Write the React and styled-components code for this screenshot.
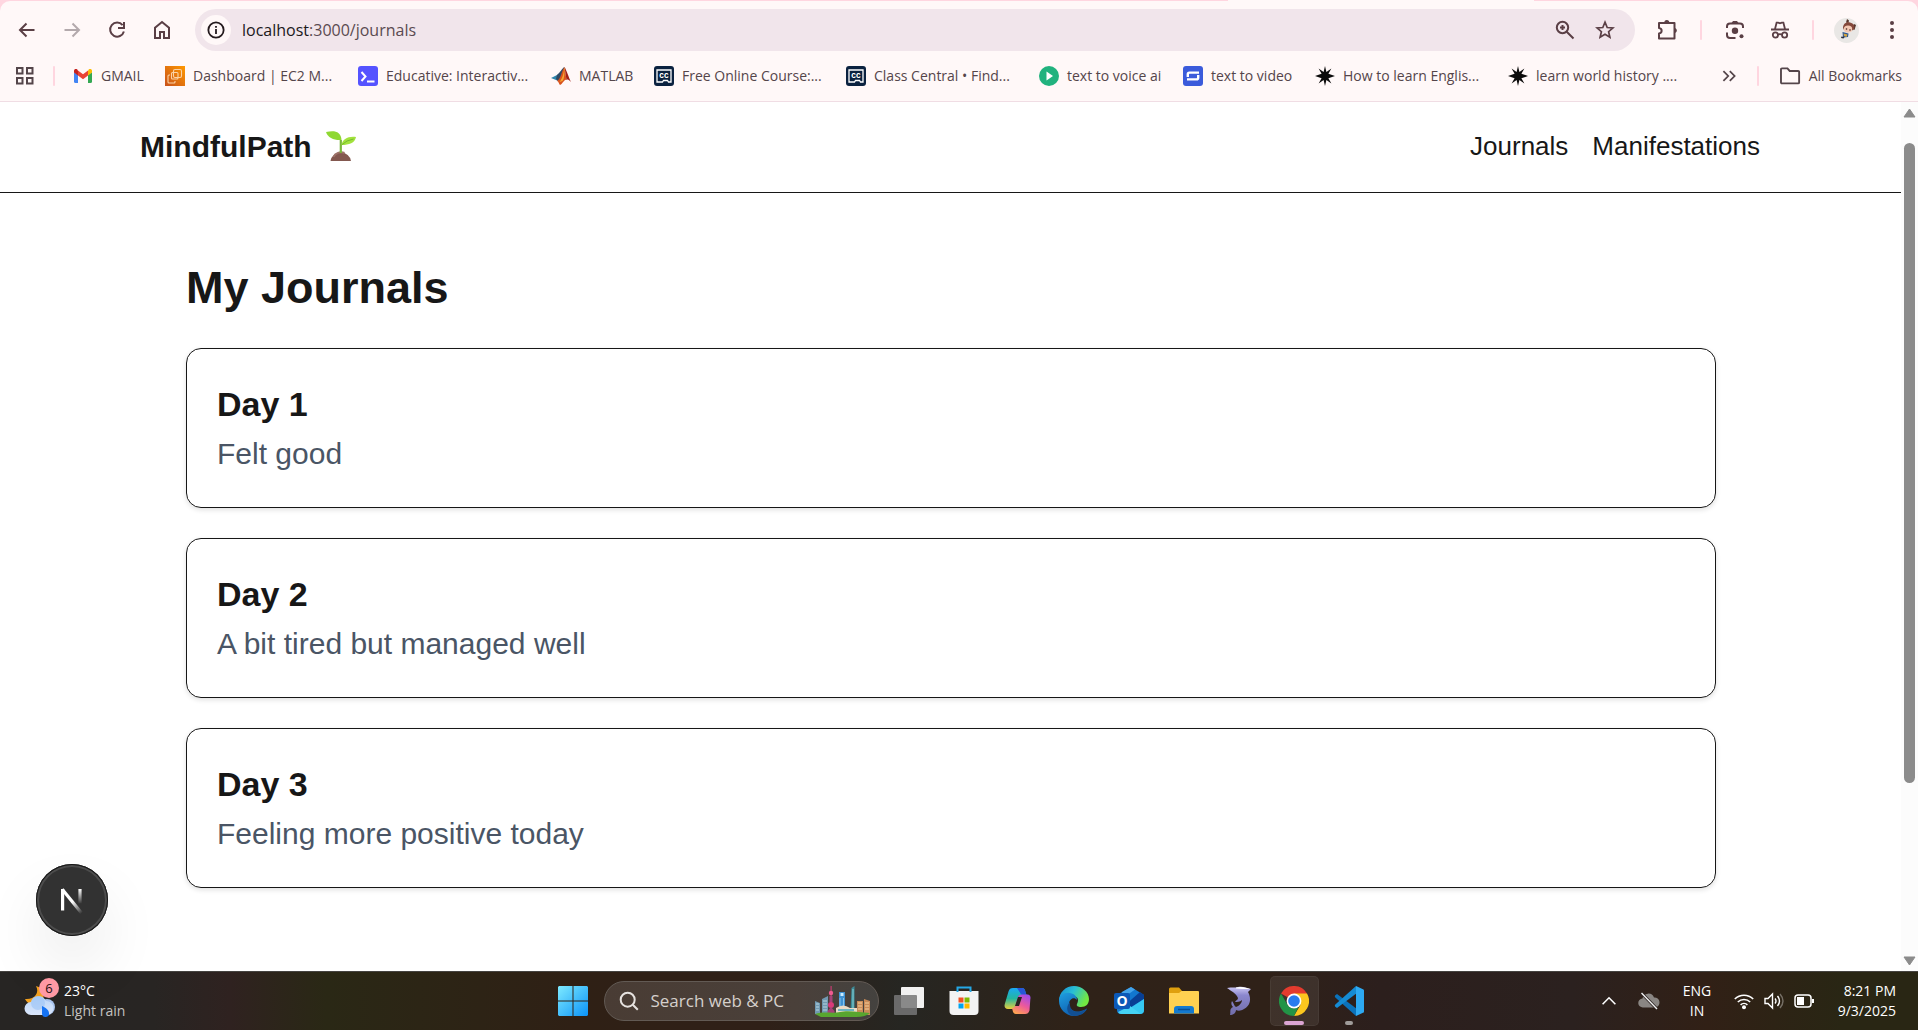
import React from 'react';
import styled, { createGlobalStyle } from 'styled-components';

const GlobalStyle = createGlobalStyle`
  * {
    box-sizing: border-box;
  }

  body {
    margin: 0;
    background: #fff;
    overflow: hidden;
  }

  button, input {
    font: inherit;
    color: inherit;
    border: none;
    background: none;
    padding: 0;
  }

  svg {
    display: block;
    flex-shrink: 0;
  }

  a {
    color: inherit;
    text-decoration: none;
  }
`;

const uiFont = `'Open Sans', 'Noto Sans', sans-serif`;

const Screen = styled.div`
  display: flex;
  flex-direction: column;
  height: 100vh;
  overflow: hidden;
`;

/* ---------- browser ---------- */

const TabStrip = styled.div`
  background: linear-gradient(to right, #ffd6e0 64%, #fff8f8 64%, #fff8f8 80%, #ffd6e0 80%);
  padding-top: 1px;
`;

const BrowserChrome = styled.header`
  background: #fff8f8;
  border-bottom: 1px solid #f0dde4;
  border-radius: 10px 10px 0 0;
  color: #5a3f45;
  font-family: ${uiFont};
`;

const Toolbar = styled.div`
  display: flex;
  align-items: center;
  height: 58px;
  padding: 0 4px;
`;

const ToolButton = styled.button`
  display: flex;
  align-items: center;
  justify-content: center;
  width: ${({ $narrow }) => ($narrow ? '40px' : '45px')};
  height: 40px;
  color: ${({ $muted }) => ($muted ? '#b3a9ac' : 'inherit')};
`;

const AddressBar = styled.div`
  flex: 1;
  display: flex;
  align-items: center;
  height: 42px;
  margin: 0 10px 0 11px;
  padding: 0 10px 0 6px;
  border-radius: 21px;
  background: #f1e5eb;
`;

const SiteInfo = styled.button`
  display: flex;
  align-items: center;
  justify-content: center;
  width: 30px;
  height: 30px;
  border-radius: 50%;
  background: #fff8f8;
  color: #241a1d;
`;

const Url = styled.div`
  flex: 1;
  padding-left: 11px;
  font-size: 16px;
  line-height: 24px;
  color: #5a4a50;

  b {
    font-weight: 400;
    color: #20181b;
  }
`;

const Divider = styled.span`
  width: 2px;
  height: 20px;
  margin: 0 ${({ $gap }) => $gap || 10}px;
  border-radius: 1px;
  background: #ffd6e0;
  flex-shrink: 0;
`;

const BookmarksBar = styled.nav`
  display: flex;
  align-items: center;
  height: 42px;
  padding: 0 16px 8px 15px;
  font-size: 14px;
  line-height: 20px;
  color: #54454a;
`;

const Bookmark = styled.a`
  display: flex;
  align-items: center;
  gap: 8px;
  width: ${({ $width }) => ($width ? `${$width}px` : 'auto')};
  flex-shrink: 0;
  white-space: nowrap;
`;

const BookmarkEnd = styled.div`
  display: flex;
  align-items: center;
  margin-left: auto;
`;

/* ---------- web page ---------- */

const Viewport = styled.div`
  position: relative;
  flex: 1;
  min-height: 0;
  display: flex;
  font-family: 'Liberation Sans', Arial, sans-serif;
  color: #171717;
  background: #fff;
`;

const Page = styled.div`
  flex: 1;
  overflow: hidden;
`;

const SiteHeader = styled.div`
  display: flex;
  align-items: center;
  justify-content: space-between;
  height: 91px;
  padding: 0 141px 2px 140px;
  border-bottom: 1px solid #171717;
`;

const Brand = styled.a`
  display: flex;
  align-items: center;
  gap: 13px;
  font-size: 30px;
  line-height: 45px;
  font-weight: 700;
`;

const SiteNav = styled.nav`
  display: flex;
  gap: 24px;
  font-size: 26px;
  line-height: 38px;
`;

const Main = styled.main`
  padding: 65px 185px 60px 186px;
`;

const Title = styled.h1`
  margin: 0 0 30px;
  font-size: 45px;
  line-height: 60px;
  font-weight: 700;
`;

const JournalList = styled.div`
  display: grid;
  gap: 30px;
`;

const JournalCard = styled.article`
  padding: 29px 30px 31px;
  border: 1px solid #171717;
  border-radius: 15px;
  box-shadow: 0 2px 5px rgba(0, 0, 0, 0.12);
`;

const JournalTitle = styled.h2`
  margin: 0;
  font-size: 34px;
  line-height: 53px;
  font-weight: 600;
`;

const JournalText = styled.p`
  margin: 0;
  font-size: 30px;
  line-height: 45px;
  color: #4a5565;
`;

const DevBadge = styled.button`
  position: absolute;
  left: 36px;
  bottom: 35px;
  display: flex;
  align-items: center;
  justify-content: center;
  width: 72px;
  height: 72px;
  border-radius: 50%;
  background: #323232;
  box-shadow: 0 0 0 1px #171717 inset, 0 0 0 3px #4c4c4c inset, 0 30px 60px rgba(0, 0, 0, 0.08);
`;

const ScrollTrack = styled.div`
  display: grid;
  grid-template-rows: 22px 19fr 640fr 168fr 20px;
  justify-items: center;
  align-items: center;
  width: 17px;
  background: #fcfcfc;
`;

const ScrollThumb = styled.div`
  grid-row: 3;
  width: 11px;
  height: 100%;
  border-radius: 6px;
  background: #8b8b8b;
`;

const ScrollArrow = styled.svg`
  grid-row: ${({ $row }) => $row};
`;

/* ---------- taskbar ---------- */

const TaskbarWrap = styled.footer`
  display: grid;
  grid-template-columns: minmax(0, 1fr) auto minmax(0, 1fr);
  align-items: center;
  height: 59px;
  padding-left: 4px;
  border-top: 1px solid #454340;
  background: linear-gradient(
    to right,
    #272523 0%,
    #282523 8%,
    #2f2220 12%,
    #2a2815 17%,
    #2f2015 30%,
    #2f2018 40%,
    #262622 47%,
    #2f2218 56%,
    #2f2118 66%,
    #2c1f1d 72%,
    #2b211f 82%,
    #312016 89%,
    #292614 96%,
    #292614 100%
  );
  color: #fff;
  font-family: ${uiFont};
  font-size: 14px;
  line-height: 20px;
`;

const Weather = styled.button`
  position: relative;
  display: flex;
  align-items: center;
  gap: 8px;
  justify-self: start;
  margin-left: 20px;
  text-align: left;
`;

const WeatherText = styled.span`
  display: flex;
  flex-direction: column;

  small {
    font-size: 14px;
    color: #c4c2c0;
  }
`;

const CountBadge = styled.span`
  position: absolute;
  left: 15px;
  top: -3px;
  width: 20px;
  height: 20px;
  border-radius: 50%;
  background: #ff99a4;
  color: #1c1012;
  font-size: 13px;
  line-height: 20px;
  text-align: center;
`;

const Apps = styled.div`
  display: flex;
  align-items: center;
`;

const AppButton = styled.button`
  position: relative;
  display: flex;
  align-items: center;
  justify-content: center;
  width: 49px;
  height: 50px;
  margin: 0 3px;
  border-radius: 5px;
  background: ${({ $active }) => ($active ? 'rgba(255, 255, 255, 0.08)' : 'none')};
  box-shadow: ${({ $active }) => ($active ? '0 0 0 1px rgba(255, 255, 255, 0.05) inset' : 'none')};
`;

const Running = styled.span`
  position: absolute;
  bottom: 1px;
  width: ${({ $wide }) => ($wide ? '20px' : '8px')};
  height: 4px;
  border-radius: 2px;
  background: ${({ $wide }) => ($wide ? '#dba5d3' : '#a09c9a')};
`;

const SearchBox = styled.label`
  display: flex;
  align-items: center;
  width: 275px;
  height: 40px;
  margin: 0 3px;
  padding: 0 6px 0 14px;
  border: 1px solid #625a54;
  border-radius: 20px;
  background: linear-gradient(to right, #493c34, #4a403a 70%, #44423f);

  input {
    flex: 1;
    min-width: 0;
    margin-left: 12px;
    font-size: 17px;
    line-height: 24px;
    outline: none;
  }

  input::placeholder {
    color: #d5d0cc;
    opacity: 1;
  }
`;

const Tray = styled.div`
  display: flex;
  align-items: center;
  justify-self: end;
  padding-right: 22px;
`;

const TrayButton = styled.button`
  display: flex;
  align-items: center;
  justify-content: center;
  width: 40px;
  height: 40px;
`;

const TrayStatus = styled.button`
  display: flex;
  align-items: center;
  gap: 10px;
  margin: 0 10px 0 9px;
`;

const TrayText = styled.button`
  display: flex;
  flex-direction: column;
  width: ${({ $width }) => $width}px;
  text-align: ${({ $align }) => $align};
  white-space: nowrap;
`;

/* ---------- icons ---------- */

const Line = ({ size = 20, w = 2, children, ...rest }) => (
  <svg width={size} height={size} viewBox="0 0 20 20" fill="none" stroke="currentColor" strokeWidth={w} {...rest}>
    {children}
  </svg>
);

const BackIcon = () => <Line><path d="M17.500 10H3.500M9.500 3.500L3 10l6.500 6.500" /></Line>;
const ForwardIcon = () => <Line><path d="M2.500 10h14M10.500 3.500L17 10l-6.500 6.500" /></Line>;
const ReloadIcon = () => <Line><path d="M15.600 5.200A7 7 0 1 0 16.900 11.500M17 2v6h-6" /></Line>;
const HomeIcon = () => <Line><path d="M3 18V7.800L10 2l7 5.800V18h-5v-6H8v6H3z" /></Line>;
const InfoIcon = () => (
  <Line size={18}><circle cx="10" cy="10" r="8.500" /><path d="M10 9v5.500M10 5.500v2" /></Line>
);
const ZoomIcon = () => (
  <Line><circle cx="7.500" cy="7.500" r="5.700" /><path d="M11.700 11.700L18.500 18.500M7.500 5v5M5 7.500h5" /></Line>
);
const StarIcon = () => (
  <Line w={1.7}><path d="M10 2.200l2.200 5.300 5.700.5-4.300 3.700 1.300 5.600L10 14.300l-4.900 3 1.300-5.600L2.100 8l5.700-.5z" /></Line>
);
const PuzzleIcon = () => (
  <svg width="22" height="22" viewBox="0 0 22 22" fill="none" stroke="currentColor" strokeWidth="2">
    <path d="M2 4h15.500v15.500H2v-5c3.500-.4 3.500-5 0-5.500z" strokeLinejoin="round" />
    <path d="M7.300 3.500a2.500 2.500 0 0 1 5 0zM18 9a2.600 2.600 0 0 1 0 5z" fill="currentColor" stroke="none" />
  </svg>
);
const LensIcon = () => (
  <Line>
    <path d="M2 8V6.500A3 3 0 0 1 5 3.500h10A3 3 0 0 1 18 6.500V8M2 12.500V15a3 3 0 0 0 3 3h5.500" />
    <circle cx="10" cy="10.800" r="3.200" fill="currentColor" stroke="none" />
    <circle cx="16.500" cy="16.300" r="2" fill="currentColor" stroke="none" />
    <path d="M6.500 3L8 1h4l1.500 2z" fill="currentColor" stroke="none" />
  </Line>
);
const IncognitoIcon = () => (
  <Line w={1.8}>
    <path d="M1 9.500h18M5 9l1.600-6.300h1.600L10 3.400l1.800-.7h1.600L15 9" />
    <circle cx="5.400" cy="15" r="2.600" /><circle cx="14.600" cy="15" r="2.600" /><path d="M8 14.600q2-1 4 0" />
  </Line>
);
const AvatarIcon = () => (
  <svg width="25" height="25" viewBox="0 0 25 25">
    <circle cx="12.500" cy="12.500" r="12.500" fill="#e9e7e5" />
    <path d="M13 1l2 1.500-.6 2.500-2.400-.5zM20 6l2 1-1.500 5-3-2z" fill="#56362d" />
    <path d="M9 10c0-4 3-6.500 7-5.500s5 4 4 6.500-3 1-5-1-5-1-5 2z" fill="#84483b" />
    <ellipse cx="14" cy="11" rx="4.200" ry="3.600" fill="#f3c7b2" />
    <circle cx="12.500" cy="11" r=".8" fill="#40241f" /><circle cx="16" cy="12" r=".8" fill="#40241f" />
    <path d="M8.500 14l6 1.500-.5 3.500-5 .5z" fill="#2d5794" /><path d="M9.500 15.500l4 1-1 2.500-2.500-1z" fill="#d7a43b" />
    <path d="M7.500 18.500l3 .5-1 1.500-2.500-.5z" fill="#2a2c38" />
  </svg>
);
const DotsIcon = () => (
  <svg width="20" height="20" viewBox="0 0 20 20" fill="currentColor">
    <circle cx="10" cy="3" r="2" /><circle cx="10" cy="10" r="2" /><circle cx="10" cy="17" r="2" />
  </svg>
);
const GridIcon = () => (
  <Line><path d="M2 2h5.500v5.500H2zM12 2h5.500v5.500H12zM2 12h5.500v5.500H2zM12 12h5.500v5.500H12z" /></Line>
);
const ChevronsIcon = () => <Line size={16} w={2.2}><path d="M3 4l6 6-6 6M11 4l6 6-6 6" /></Line>;
const FolderLineIcon = () => (
  <Line size={22} w={1.7}><path d="M1.800 4a.9.900 0 0 1 .9-.9h5l2 2.300h7.700a.9.900 0 0 1 .9.900v9.500a.9.900 0 0 1-.9.900H2.700a.9.900 0 0 1-.9-.9z" /></Line>
);

const GmailIcon = () => (
  <svg width="20" height="20" viewBox="0 0 20 20">
    <path d="M1 6v9.500A1.500 1.500 0 0 0 2.500 17H5V9z" fill="#4285f4" />
    <path d="M19 6v9.500a1.500 1.500 0 0 1-1.500 1.500H15V9z" fill="#34a853" />
    <path d="M15 5v4.500l4-3V5c0-2-2-2.500-3.300-1.500z" fill="#fbbc04" />
    <path d="M5 9.500V4.500l5 3.800 5-3.800v5l-5 3.800z" fill="#ea4335" />
    <path d="M1 5v1.500l4 3v-5L4.300 3.500C3 2.500 1 3 1 5z" fill="#c5221f" />
  </svg>
);
const Ec2Icon = () => (
  <svg width="20" height="20" viewBox="0 0 20 20">
    <defs><linearGradient id="ec2" x1="0" y1="1" x2="1" y2="0"><stop stopColor="#c8511b" /><stop offset="1" stopColor="#f90" /></linearGradient></defs>
    <path d="M0 0h20v20H0z" fill="url(#ec2)" />
    <g fill="none" stroke="#fbd3a6" strokeWidth="1.100">
      <rect x="8.500" y="3.500" width="8" height="8" rx="1.500" /><rect x="6.500" y="6.500" width="6.500" height="6.500" rx="1" />
      <path d="M5 9H4a1 1 0 0 0-1 1v6a1 1 0 0 0 1 1h5a1 1 0 0 0 1-1v-1" />
    </g>
  </svg>
);
const EducativeIcon = () => (
  <svg width="20" height="20" viewBox="0 0 20 20">
    <rect width="20" height="20" rx="3" fill="#5553ff" />
    <path d="M3.500 6l4 4.500-4 4.500M9 15.500h7.500" fill="none" stroke="#fff" strokeWidth="2" />
  </svg>
);
const MatlabIcon = () => (
  <svg width="20" height="20" viewBox="0 0 20 20">
    <path d="M0 12l6-3 4-3 1 3-4 6-2-1z" fill="#2e86ad" />
    <path d="M6 9c3-2 5-7 7.500-8L10 12l-3 3-2-2z" fill="#314a64" />
    <path d="M13.500 1C10 6 10.500 12 6 15c1.500 0 2 3 3 4 3-1 4-6 6.500-5z" fill="#d9541e" />
    <path d="M13.500 1c2 3 4 10 6.500 15-2-2-3-3-4.500-2z" fill="#a32217" />
    <path d="M13.500 1c-1 5-1 10-5 15l3-1c2-2 2-8 2-14z" fill="#f7a833" />
  </svg>
);
const ClassCentralIcon = () => (
  <svg width="20" height="20" viewBox="0 0 20 20">
    <rect width="20" height="20" rx="3" fill="#0b2240" />
    <path d="M3 4h14v12h-2.500l-1-1.500h-4L8.500 16H3z" fill="none" stroke="#fff" strokeWidth="1.300" />
    <text x="10" y="12" fontSize="8" fontWeight="700" fill="#fff" textAnchor="middle" fontFamily="Inter, sans-serif">cc</text>
  </svg>
);
const VoiceIcon = () => (
  <svg width="20" height="20" viewBox="0 0 20 20">
    <circle cx="10" cy="10" r="10" fill="#21b27e" /><path d="M7.500 5.500l6.500 4.500-6.500 4.500z" fill="#fff" />
  </svg>
);
const VideoIcon = () => (
  <svg width="20" height="20" viewBox="0 0 20 20">
    <rect width="20" height="20" rx="3" fill="#3b5bdb" />
    <path d="M4.800 11V8.200a1.600 1.600 0 0 1 1.600-1.600H16M15.200 9v2.800a1.600 1.600 0 0 1-1.600 1.600H4" fill="none" stroke="#fff" strokeWidth="2.400" />
  </svg>
);
const BurstIcon = () => (
  <svg width="20" height="20" viewBox="0 0 20 20">
    <path d="M10 0l1.400 6 5-3.500-3 5.200L20 10l-6.600 2.300 3 5.200-5-3.500L10 20l-1.400-6-5 3.500 3-5.200L0 10l6.600-2.300-3-5.200 5 3.500z" fill="#0b0b0b" />
  </svg>
);

const SeedlingIcon = () => (
  <svg width="32" height="32" viewBox="0 0 32 32">
    <path d="M5.500 31a10.300 9.500 0 0 1 20.500 0z" fill="#83584f" />
    <path d="M8.500 27a8 7 0 0 1 11-4" stroke="#9c7167" strokeWidth="2" fill="none" />
    <path d="M14.700 23V10h2.200v13z" fill="#79b63c" />
    <path d="M1 2c8-2 15-1 15.500 8C9 10.500 3 8 1 2z" fill="#8fd832" />
    <path d="M31 7c-1 6-7 8-14.500 8C17.500 9 23 6 31 7z" fill="#a2e23d" />
    <path d="M16.500 15q5-5 12-6" stroke="#75b92f" fill="none" />
  </svg>
);

const NextIcon = () => (
  <svg width="30" height="30" viewBox="0 0 30 30" fill="none" strokeWidth="3.200">
    <defs>
      <linearGradient id="nDiag" gradientUnits="userSpaceOnUse" x1="15" y1="17" x2="25" y2="28">
        <stop stopColor="#fff" /><stop offset="1" stopColor="#fff" stopOpacity="0" />
      </linearGradient>
      <linearGradient id="nRight" gradientUnits="userSpaceOnUse" x1="23" y1="4" x2="23" y2="19">
        <stop stopColor="#fff" /><stop offset="1" stopColor="#fff" stopOpacity="0" />
      </linearGradient>
    </defs>
    <path d="M5.600 25.500V4" stroke="#fff" />
    <path d="M5.200 4.200l19.500 24" stroke="url(#nDiag)" />
    <path d="M21.400 4h3.200v14.500h-3.200z" fill="url(#nRight)" />
  </svg>
);

const WeatherIcon = () => (
  <svg width="32" height="38" viewBox="0 0 32 38">
    <defs><linearGradient id="cloud" x1="0" y1="0" x2="0" y2="1"><stop stopColor="#b9d6f8" /><stop offset="1" stopColor="#dbe6fb" /></linearGradient></defs>
    <path d="M12 4c4 7-2 14-11 13 3 6 11 8 16 3s3-14-5-16z" fill="#f2a01e" />
    <circle cx="23" cy="25" r="8" fill="#a9c4ee" />
    <path d="M7 33a6.500 6.500 0 0 1 0-13 8 8 0 0 1 15-1 7 7 0 0 1 1 14z" fill="url(#cloud)" />
    <circle cx="14" cy="21" r="7" fill="#9bc3f5" opacity=".6" />
    <path d="M18 24c4 2 7 4 7 7a3.500 3.500 0 0 1-7 1z" fill="#1573f3" />
  </svg>
);
const StartIcon = () => (
  <svg width="30" height="30" viewBox="0 0 30 30">
    <defs><linearGradient id="win" x1="0" y1="0" x2="1" y2="1"><stop stopColor="#7eeaff" /><stop offset="1" stopColor="#0b93f8" /></linearGradient></defs>
    <path d="M1 0h13.500v14.500H0V1zM15.500 0H29l1 1v13.500H15.500zM0 15.500h14.500V30H1l-1-1zM15.500 15.500H30V29l-1 1H15.500z" fill="url(#win)" />
  </svg>
);
const SearchIcon = () => (
  <Line><circle cx="8.700" cy="8.700" r="7" stroke="#e6e2df" /><path d="M13.800 13.800l5 5" stroke="#e6e2df" /></Line>
);
const SkylineIcon = () => (
  <svg width="58" height="34" viewBox="0 0 58 34">
    <path d="M1 17l5 2v11H1zM8 15l6-3v18H8z" fill="#7199b1" />
    <path d="M2 20h3M2 23h3M2 26h3M9 17h4M9 20h4M9 23h4M9 26h4" stroke="#b8d4df" />
    <path d="M16.500 2h1.200v28h-1.200z" fill="#c63d72" />
    <circle cx="17" cy="9" r="2.200" fill="#ef5a91" /><circle cx="17" cy="21" r="3" fill="#d83b79" />
    <path d="M15.500 12h3v6h-3zM13.500 27l3.500-4 3.500 4v4h-7z" fill="#a54279" />
    <path d="M25 8h6v20h-6z" fill="#3f92d4" /><path d="M26.500 9h3v3h-3z" fill="#c9ecff" /><path d="M26 14v12M29.500 14v12" stroke="#82c4ee" />
    <path d="M37.500 4l3-2v25h-4z" fill="#3d8b98" /><path d="M39 5v20" stroke="#8ad3d8" />
    <path d="M43 17h6v12h-6zM50 15l6 2v14h-6z" fill="#c98b58" /><path d="M44 19h4M44 22h4M44 25h4M51 19h4M51 22h4M51 25h4" stroke="#f3cf9c" />
    <path d="M22 24q7-5 14 0h7v6H22z" fill="#e9dac6" /><path d="M24 26h16" stroke="#6bb3c0" strokeWidth="2" />
    <path d="M1 30c9-3 18 0 25-2s20 0 30 1q-4 4-14 4H7z" fill="#58a62f" />
  </svg>
);
const TaskViewIcon = () => (
  <svg width="32" height="30" viewBox="0 0 32 30">
    <rect x="8" y="1" width="23" height="21" rx="1" fill="#f1f1f1" />
    <rect x="1" y="9" width="23" height="20" rx="1" fill="#777" fillOpacity=".85" />
  </svg>
);
const StoreIcon = () => (
  <svg width="30" height="30" viewBox="0 0 30 30">
    <path d="M.500 5h29v20a4 4 0 0 1-4 4h-21a4 4 0 0 1-4-4z" fill="#f3f3f3" />
    <path d="M8.500 6V1.500h13V6" fill="none" stroke="#25a8e6" strokeWidth="2" />
    <path d="M9.500 11.500h5v5h-5z" fill="#f25022" /><path d="M15.500 11.500h5v5h-5z" fill="#7fba00" />
    <path d="M9.500 17.500h5v5h-5z" fill="#00a4ef" /><path d="M15.500 17.500h5v5h-5z" fill="#ffb900" />
  </svg>
);
const CopilotIcon = () => (
  <svg width="30" height="28" viewBox="0 0 30 28">
    <defs>
      <linearGradient id="copA" x1="0" y1="0" x2="0" y2="1"><stop stopColor="#1aa9f5" /><stop offset=".5" stopColor="#24b6a0" /><stop offset="1" stopColor="#e9cf3b" /></linearGradient>
      <linearGradient id="copB" x1=".7" y1="0" x2=".2" y2="1"><stop stopColor="#a24be8" /><stop offset=".5" stopColor="#ed5a9a" /><stop offset="1" stopColor="#ffa84d" /></linearGradient>
    </defs>
    <path d="M9 1h9c2 0 3 1.500 3.500 4l1 3h-5c-2 0-3 1-3.500 3l-2 8c-.5 2-1.500 3-3.500 3H4c-3 0-4-2-3.200-5L4.500 4.500C5.300 2 6.500 1 9 1z" fill="url(#copA)" />
    <path d="M13 1h5c2 0 3 1.500 3.500 4l1 3h-5z" fill="#2756d8" />
    <path d="M21 27h-9c-2 0-3-1.500-3.500-4l-.5-2c2 0 3-1 3.500-3l2.500-8c.5-1.500 1.500-2.500 3.500-2.500h6c2.500 0 3.500 2 2.800 5L25.500 23.500C24.700 26 23.500 27 21 27z" fill="url(#copB)" />
    <path d="M14 10h4l-3 9h-4z" fill="#292421" />
  </svg>
);
const EdgeIcon = () => (
  <svg width="30" height="30" viewBox="0 0 30 30">
    <defs>
      <linearGradient id="edgeA" x1="0" y1="0" x2="1" y2=".4"><stop stopColor="#1689d6" /><stop offset=".5" stopColor="#29bfd4" /><stop offset="1" stopColor="#72e843" /></linearGradient>
      <linearGradient id="edgeB" x1="0" y1="0" x2=".6" y2="1"><stop stopColor="#1f9fe0" /><stop offset="1" stopColor="#0d59ac" /></linearGradient>
    </defs>
    <path d="M0 15C0 6 7 0 15 0s15 6 15 13c0 5-3 8-8 8-3 0-5-1-4-3 3-6-1-8-5-8C7 10 2 12 0 15z" fill="url(#edgeA)" />
    <path d="M0 15c0-6 5-9 11-8 5 1 7 4 7 7-3-4-8-1-8 4 0 6 6 9 12 7l6-2c-3 5-8 7-13 7C7 30 0 23 0 15z" fill="url(#edgeB)" />
    <path d="M11 16c-1 8 5 12 13 9l4-3c-2 5-8 8-13 8-7-1-9-9-4-14z" fill="#124f92" />
  </svg>
);
const OutlookIcon = () => (
  <svg width="31" height="30" viewBox="0 0 31 30">
    <path d="M3 9L17 1l13 8v15a4 4 0 0 1-4 4H7a4 4 0 0 1-4-4z" fill="#1278cf" />
    <path d="M8 6l9-5 4 2.500L9 12z" fill="#43a3ea" /><path d="M26 6l4 3v4L14 23l-4-3z" fill="#083f94" />
    <path d="M30 13v11a4 4 0 0 1-4 4H7z" fill="#36c9f2" /><path d="M4 26l12-6 11 8H7a4 4 0 0 1-3-2z" fill="#45d3f5" />
    <rect x="0" y="7" width="16" height="16" rx="2" fill="#0c59b8" />
    <text x="8" y="20" textAnchor="middle" fontSize="14" fontWeight="700" fill="#fff" fontFamily="Open Sans, sans-serif">O</text>
  </svg>
);
const ExplorerIcon = () => (
  <svg width="30" height="28" viewBox="0 0 30 28">
    <path d="M0 2a1.500 1.500 0 0 1 1.500-1.500H10L13 4v6H0z" fill="#dfa00e" />
    <path d="M0 6h10l2.500-2H29a1 1 0 0 1 1 1v21.500H0z" fill="#ffd151" />
    <path d="M5 26.500V22a3 3 0 0 1 3-3h14a3 3 0 0 1 3 3v4.500z" fill="#137ad0" /><path d="M9 22.500h12" stroke="#084f95" strokeWidth="1.500" />
  </svg>
);
const DolphinIcon = () => (
  <svg width="28" height="30" viewBox="0 0 28 30">
    <defs><linearGradient id="dol" x1="0" y1="0" x2="0" y2="1"><stop stopColor="#cfcaf6" /><stop offset=".3" stopColor="#8b87ce" /><stop offset="1" stopColor="#716da9" /></linearGradient></defs>
    <path d="M2 2c5-1 8 0 11-1 5-1 8 1 13 2l-3 3c4 7 2 14-4 17-3 2-6 2-8 1 0 3-3 5-6 5 1-3-1-6 3-8-2-2-2-4-1-6 2 2 2 5 4 6 3-1 6-4 6-7-2 2-5 2-7 2 1-2 3-2 3-4-2-5-7-7-11-10z" fill="url(#dol)" />
    <path d="M11 1.500c5-1.500 10 0 14 1.500-5 0-9 0-14-.5z" fill="#fff" />
  </svg>
);
const ChromeIcon = () => (
  <svg width="30" height="30" viewBox="0 0 30 30">
    <path d="M15 15L2 7.500A15 15 0 0 1 28 7.500z" fill="#e33b2e" />
    <path d="M15 7.500h13A15 15 0 0 1 15 30l6.500-11.200z" fill="#fcc71e" />
    <path d="M2 7.500l6.500 11.300c1.500 2.500 4 3.700 6.500 3.700l4.300-1.200L15 30A15 15 0 0 1 2 7.500z" fill="#229446" />
    <circle cx="15" cy="15" r="7.400" fill="#fff" /><circle cx="15" cy="15" r="5.800" fill="#287bee" />
  </svg>
);
const VsCodeIcon = () => (
  <svg width="30" height="30" viewBox="0 0 30 30">
    <path d="M1 9.500l2-1.500 20 15-1 7L.8 11z" fill="#0b72ba" />
    <path d="M1 20.500L3 22 23 7l-1-7L.8 19z" fill="#158bd3" />
    <path d="M22 0l7 3.200a1.500 1.500 0 0 1 1 1.400v20.800a1.500 1.500 0 0 1-1 1.400L22 30z" fill="#2da9f2" />
  </svg>
);

const CloudOffIcon = () => (
  <svg width="22" height="18" viewBox="0 0 22 18">
    <path d="M5 15.500a4.500 4.500 0 0 1-.5-9A6 6 0 0 1 16 5.500a5 5 0 0 1 1 10z" fill="#8a8683" />
    <path d="M3.500 1L19 17" stroke="#2b211f" strokeWidth="3" /><path d="M3.500 1L19 17" stroke="#f2f2f2" strokeWidth="1.400" />
  </svg>
);
const WifiIcon = () => (
  <Line w={1.6}>
    <path d="M.8 8a13 13 0 0 1 18.400 0M3.800 11a9 9 0 0 1 12.400 0M6.600 13.800a5 5 0 0 1 6.800 0" />
    <circle cx="10" cy="16.300" r="2" fill="currentColor" stroke="none" />
  </Line>
);
const VolumeIcon = () => (
  <Line w={1.4}>
    <path d="M1 7.500h3L8.500 3v14L4 12.500H1z" /><path d="M11 7.500q2 2.500 0 5M13.500 5q4 5 0 10" />
    <path d="M16 3q6 7 0 14" opacity=".35" />
  </Line>
);
const BatteryIcon = () => (
  <Line w={1.5}>
    <rect x="1" y="4" width="16" height="12" rx="3" /><path d="M3 6h7v8H3z" fill="currentColor" stroke="none" />
    <path d="M19 8v4" strokeWidth="2.200" />
  </Line>
);

/* ---------- data ---------- */

const bookmarks = [
  { label: 'GMAIL', icon: GmailIcon, width: 92 },
  { label: 'Dashboard | EC2 M...', icon: Ec2Icon, width: 193 },
  { label: 'Educative: Interactiv...', icon: EducativeIcon, width: 193 },
  { label: 'MATLAB', icon: MatlabIcon, width: 103 },
  { label: 'Free Online Course:...', icon: ClassCentralIcon, width: 192 },
  { label: 'Class Central • Find...', icon: ClassCentralIcon, width: 193 },
  { label: 'text to voice ai', icon: VoiceIcon, width: 144 },
  { label: 'text to video', icon: VideoIcon, width: 132 },
  { label: 'How to learn Englis...', icon: BurstIcon, width: 193 },
  { label: 'learn world history ....', icon: BurstIcon },
];

const journals = [
  { id: 1, title: 'Day 1', content: 'Felt good' },
  { id: 2, title: 'Day 2', content: 'A bit tired but managed well' },
  { id: 3, title: 'Day 3', content: 'Feeling more positive today' },
];

const apps = [
  { name: 'Task View', icon: TaskViewIcon },
  { name: 'Microsoft Store', icon: StoreIcon },
  { name: 'Copilot', icon: CopilotIcon },
  { name: 'Edge', icon: EdgeIcon },
  { name: 'Outlook', icon: OutlookIcon },
  { name: 'File Explorer', icon: ExplorerIcon },
  { name: 'Dolphin', icon: DolphinIcon },
  { name: 'Chrome', icon: ChromeIcon, active: true, running: true },
  { name: 'VS Code', icon: VsCodeIcon, running: true },
];

const Browser = () => (
  <TabStrip>
    <BrowserChrome>
      <Toolbar>
        <ToolButton aria-label="Back"><BackIcon /></ToolButton>
        <ToolButton aria-label="Forward" $muted><ForwardIcon /></ToolButton>
        <ToolButton aria-label="Reload"><ReloadIcon /></ToolButton>
        <ToolButton aria-label="Home"><HomeIcon /></ToolButton>
        <AddressBar>
          <SiteInfo aria-label="Site information"><InfoIcon /></SiteInfo>
          <Url><b>localhost</b>:3000/journals</Url>
          <ToolButton aria-label="Zoom" $narrow><ZoomIcon /></ToolButton>
          <ToolButton aria-label="Bookmark this page" $narrow><StarIcon /></ToolButton>
        </AddressBar>
        <ToolButton aria-label="Extensions"><PuzzleIcon /></ToolButton>
        <Divider />
        <ToolButton aria-label="Lens"><LensIcon /></ToolButton>
        <ToolButton aria-label="Incognito"><IncognitoIcon /></ToolButton>
        <Divider />
        <ToolButton aria-label="Profile"><AvatarIcon /></ToolButton>
        <ToolButton aria-label="Menu"><DotsIcon /></ToolButton>
      </Toolbar>
      <BookmarksBar>
        <Bookmark as="button" aria-label="Apps"><GridIcon /></Bookmark>
        <Divider $gap={18} />
        {bookmarks.map(({ label, icon: Icon, width }) => (
          <Bookmark key={label} href="#" $width={width}>
            <Icon />
            {label}
          </Bookmark>
        ))}
        <BookmarkEnd>
          <Bookmark as="button" aria-label="More bookmarks"><ChevronsIcon /></Bookmark>
          <Divider $gap={20} />
          <Bookmark href="#"><FolderLineIcon />All Bookmarks</Bookmark>
        </BookmarkEnd>
      </BookmarksBar>
    </BrowserChrome>
  </TabStrip>
);

const JournalsPage = () => (
  <Viewport>
    <Page>
      <SiteHeader>
        <Brand href="#">MindfulPath <SeedlingIcon /></Brand>
        <SiteNav>
          <a href="#journals">Journals</a>
          <a href="#manifestations">Manifestations</a>
        </SiteNav>
      </SiteHeader>
      <Main>
        <Title>My Journals</Title>
        <JournalList>
          {journals.map(({ id, title, content }) => (
            <JournalCard key={id}>
              <JournalTitle>{title}</JournalTitle>
              <JournalText>{content}</JournalText>
            </JournalCard>
          ))}
        </JournalList>
      </Main>
    </Page>
    <ScrollTrack>
      <ScrollArrow $row={1} width="13" height="10" viewBox="0 0 13 10">
        <path d="M6.500 1L12 9H1z" fill="#8b8b8b" stroke="#8b8b8b" strokeLinejoin="round" />
      </ScrollArrow>
      <ScrollThumb />
      <ScrollArrow $row={5} width="13" height="10" viewBox="0 0 13 10">
        <path d="M6.500 9L1 1h11z" fill="#8b8b8b" stroke="#8b8b8b" strokeLinejoin="round" />
      </ScrollArrow>
    </ScrollTrack>
    <DevBadge aria-label="Open Next.js Dev Tools"><NextIcon /></DevBadge>
  </Viewport>
);

const Taskbar = () => (
  <TaskbarWrap>
    <Weather>
      <WeatherIcon />
      <CountBadge>6</CountBadge>
      <WeatherText>
        23°C
        <small>Light rain</small>
      </WeatherText>
    </Weather>
    <Apps>
      <AppButton aria-label="Start"><StartIcon /></AppButton>
      <SearchBox>
        <SearchIcon />
        <input type="text" placeholder="Search web & PC" aria-label="Search web & PC" />
        <SkylineIcon />
      </SearchBox>
      {apps.map(({ name, icon: Icon, active, running }) => (
        <AppButton key={name} aria-label={name} $active={active}>
          <Icon />
          {running && <Running $wide={active} />}
        </AppButton>
      ))}
    </Apps>
    <Tray>
      <TrayButton aria-label="Show hidden icons">
        <Line size={16} w={2}><path d="M2 14l8-8 8 8" /></Line>
      </TrayButton>
      <TrayButton aria-label="OneDrive"><CloudOffIcon /></TrayButton>
      <TrayText $width={56} $align="center"><span>ENG</span><span>IN</span></TrayText>
      <TrayStatus aria-label="Network, volume and battery">
        <WifiIcon />
        <VolumeIcon />
        <BatteryIcon />
      </TrayStatus>
      <TrayText $width={72} $align="right"><span>8:21 PM</span><span>9/3/2025</span></TrayText>
    </Tray>
  </TaskbarWrap>
);

const App = () => (
  <Screen>
    <GlobalStyle />
    <Browser />
    <JournalsPage />
    <Taskbar />
  </Screen>
);

export default App;
